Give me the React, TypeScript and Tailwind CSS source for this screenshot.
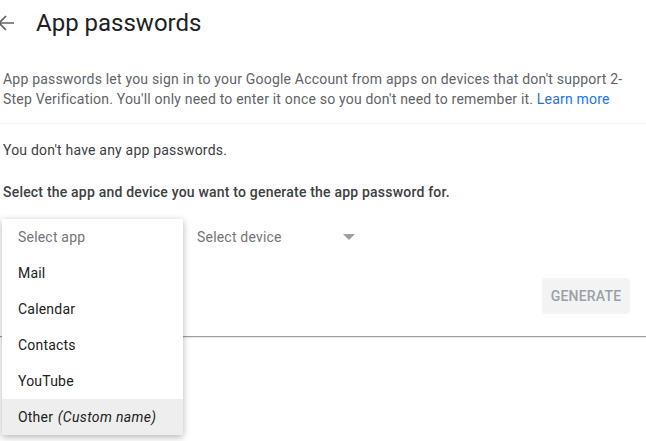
const apps = ['Mail', 'Calendar', 'Contacts', 'YouTube'];

const App = () => {
    return (
        <div className="relative w-[646px] h-[441px] overflow-hidden bg-white font-['Roboto','Liberation_Sans',sans-serif] tracking-[0.2px]">
            {/* 헤더 */}
            <div className="flex items-center h-[46px]">
                <svg width="18" height="18" viewBox="0 0 18 18" className="ml-[-3px]">
                    <path d="M17 9H2M9 2L2 9l7 7" fill="none" stroke="#5f6368" strokeWidth="1.7" />
                </svg>
                <h1 className="ml-[21px] text-[24px] leading-none text-[#202124] font-normal tracking-normal">App passwords</h1>
            </div>

            {/* 설명 */}
            <p className="mt-[23px] pl-[3px] pr-[20px] text-[14px] leading-[20px] text-[#5f6368]">
                App passwords let you sign in to your Google Account from apps on devices that don't support 2-Step Verification. You'll only need to enter it once so you don't need to remember it.{' '}
                <span className="text-[#1a73e8]">Learn more</span>
            </p>

            <div className="mt-[14px] h-px bg-[#f1f3f4]" />

            <p className="mt-[16px] pl-[3px] text-[14px] leading-[20px] text-[#3c4043]">You don't have any app passwords.</p>
            <p className="mt-[22px] pl-[3px] text-[14px] leading-[20px] text-[#3c4043] font-medium">
                Select the app and device you want to generate the app password for.
            </p>

            {/* 선택 영역 */}
            <div className="mt-[17px] flex h-[36px]">
                <div className="relative w-[183px] shrink-0">
                    {/* 열린 드롭다운 메뉴 */}
                    <div className="absolute left-[2px] top-0 z-10 w-[181px] bg-white shadow-[0_2px_7px_rgba(0,0,0,0.3)]">
                        <div className="flex items-center h-[36px] pl-[16px] text-[14px] text-[#757575]">Select app</div>
                        {apps.map((a) => (
                            <div key={a} className="flex items-center h-[36px] pl-[16px] text-[14px] text-[#212121]">
                                {a}
                            </div>
                        ))}
                        <div className="flex items-center h-[36px] pl-[16px] text-[14px] text-[#212121] bg-[#eeeeee]">
                            Other&nbsp;<i className="ml-[1px] tracking-[0.35px]">(Custom name)</i>
                        </div>
                    </div>
                </div>
                <div className="ml-[14px] flex items-center w-[158px] justify-between text-[14px] text-[#757575]">
                    <span>Select device</span>
                    <svg width="12" height="6" viewBox="0 0 12 6">
                        <path d="M0 0h12L6 6z" fill="#9e9e9e" />
                    </svg>
                </div>
            </div>

            <div className="mt-[23px] flex justify-end pr-[16px]">
                <button className="h-[36px] w-[88px] rounded-[4px] bg-[#f1f3f4] text-[14px] font-medium text-[#9aa0a6] tracking-[0.2px]">
                    GENERATE
                </button>
            </div>

            <div className="mt-[22px] h-px bg-[#9e9e9e] shadow-[0_1px_1px_rgba(0,0,0,0.12)]" />
        </div>
    );
};

export default App;
